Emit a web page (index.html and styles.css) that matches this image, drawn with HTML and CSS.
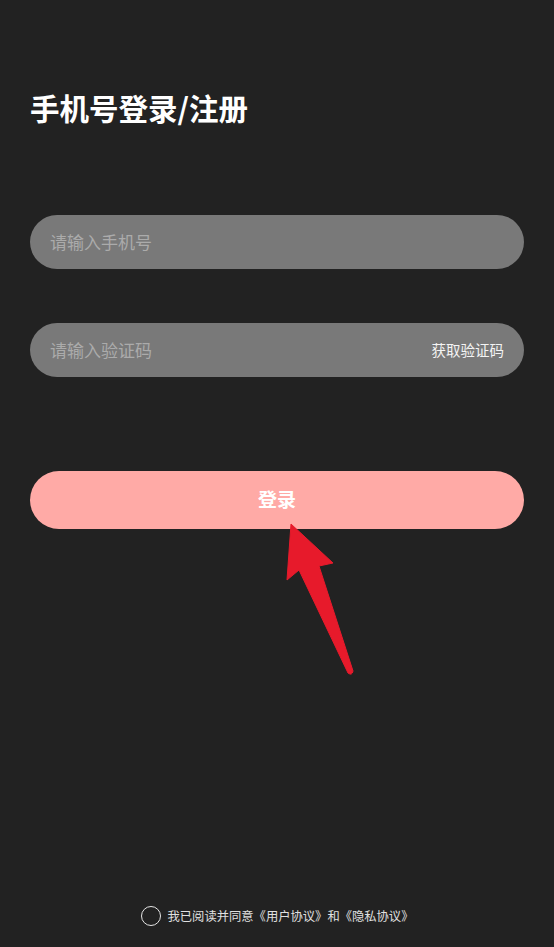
FILE: index.html
```html
<!DOCTYPE html>
<html lang="zh-CN">
<head>
<meta charset="utf-8">
<title>手机号登录/注册</title>
<link rel="stylesheet" href="styles.css">
</head>
<body>
<div class="page">
  <h1 class="title">手机号登录/注册</h1>
  <div class="field field-phone">
    <input class="field-input" type="tel" placeholder="请输入手机号">
  </div>
  <div class="field field-code">
    <input class="field-input" type="text" placeholder="请输入验证码">
    <span class="get-code">获取验证码</span>
  </div>
  <div class="login-wrap">
    <button class="login-btn" type="button">登录</button>
    <svg class="arrow" width="80" height="160" viewBox="0 0 80 160" aria-hidden="true">
      <path d="M21 3 L63 42 L49 45 L83 150 Q82 155 78 152 L29 49 L17 59 Z" fill="#e71a2b" stroke="#e71a2b" stroke-width="1" stroke-linejoin="round"/>
    </svg>
  </div>
  <div class="agree">
    <span class="check"></span>
    <span class="agree-text">我已阅读并同意《用户协议》和《隐私协议》</span>
  </div>
</div>
</body>
</html>
```
FILE: styles.css
```css
* { box-sizing: border-box; }
html, body {
  margin: 0;
  padding: 0;
  background: #222222;
}
body {
  font-family: "Noto Sans CJK SC", "Noto Sans", sans-serif;
  color: #ffffff;
}
.page {
  min-height: 100vh;
  display: flex;
  flex-direction: column;
  padding: 0 30px 21px;
}
.title {
  margin: 87px 0 0 0;
  font-size: 29.5px;
  line-height: 40px;
  font-weight: 700;
  color: #ffffff;
}
.field {
  height: 54px;
  border-radius: 27px;
  background: #797979;
  display: flex;
  align-items: center;
  padding: 0 20px 2px;
}
.field-phone { margin-top: 88px; }
.field-code { margin-top: 54px; }
.field-input {
  flex: 1;
  min-width: 0;
  border: none;
  outline: none;
  background: transparent;
  font-family: "Noto Sans CJK SC", sans-serif;
  font-size: 17px;
  color: #ffffff;
  padding: 0;
}
.field-input::placeholder {
  color: #ababab;
}
.get-code {
  font-size: 14.5px;
  color: #f4f4f4;
  white-space: nowrap;
}
.login-wrap {
  position: relative;
  margin-top: 94px;
}
.login-btn {
  display: block;
  width: 100%;
  height: 58px;
  border: none;
  border-radius: 29px;
  background: #ffaaa6;
  color: #ffffff;
  font-family: "Noto Sans CJK SC", sans-serif;
  font-size: 19px;
  font-weight: 700;
  padding: 0 0 3px;
}
.arrow {
  position: absolute;
  left: 240px;
  top: 50px;
  overflow: visible;
}
.agree {
  margin-top: auto;
  display: flex;
  align-items: center;
  justify-content: center;
  gap: 7px;
  height: 20px;
}
.check {
  width: 20px;
  height: 20px;
  border-radius: 50%;
  border: 1.5px solid #e6e6e6;
  flex-shrink: 0;
}
.agree-text {
  font-size: 12.3px;
  color: #e0e0e0;
  line-height: 20px;
  padding-bottom: 1px;
}
```
